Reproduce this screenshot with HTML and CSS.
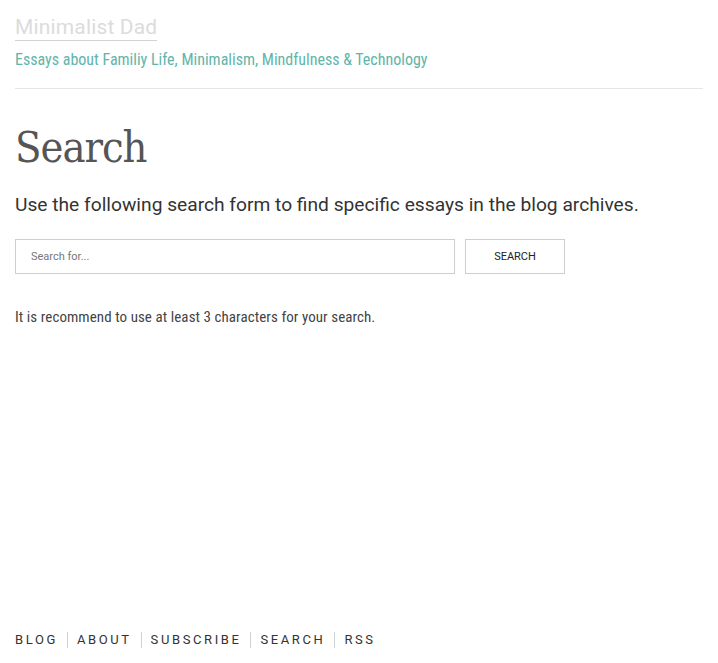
FILE: index.html
```html
<!DOCTYPE html>
<html lang="en">
<head>
<meta charset="utf-8">
<title>Search – Minimalist Dad</title>
<link rel="stylesheet" href="styles.css">
</head>
<body>
<div class="page">
  <header class="site-header">
    <a class="site-title" href="#">Minimalist Dad</a>
    <p class="tagline">Essays about Familiy Life, Minimalism, Mindfulness &amp; Technology</p>
  </header>
  <main class="content">
    <h1 class="page-title">Search</h1>
    <p class="lead">Use the following search form to find specific essays in the blog archives.</p>
    <form class="search-form">
      <input class="search-input" type="text" placeholder="Search for...">
      <button class="search-button" type="button">SEARCH</button>
    </form>
    <p class="note">It is recommend to use at least 3 characters for your search.</p>
  </main>
  <footer class="site-footer">
    <nav class="footer-nav">
      <a href="#">BLOG</a>
      <a href="#">ABOUT</a>
      <a href="#">SUBSCRIBE</a>
      <a href="#">SEARCH</a>
      <a href="#">RSS</a>
    </nav>
  </footer>
</div>
</body>
</html>
```
FILE: styles.css
```css
* { box-sizing: border-box; }
html, body { margin: 0; padding: 0; }
body {
  font-family: Roboto, "Liberation Sans", sans-serif;
  color: #333;
  background: #fff;
}
.page {
  min-height: 663px;
  padding: 0 15px;
  display: flex;
  flex-direction: column;
}
.site-header {
  padding-top: 15px;
  padding-bottom: 18px;
  border-bottom: 1px solid #e6e6e6;
}
.site-title {
  display: inline-block;
  font-size: 21px;
  line-height: 25px;
  color: #dcdcdc;
  text-decoration: none;
  border-bottom: 1px solid #d2d2d2;
  letter-spacing: 0.15px;
}
.tagline {
  margin: 9px 0 0;
  font-size: 16px;
  line-height: 20px;
  color: #5fb5aa;
  font-stretch: condensed;
}
.content { flex: 1; }
.page-title {
  margin: 33px 0 0;
  font-family: "DejaVu Serif", "Liberation Serif", serif;
  font-stretch: condensed;
  font-weight: normal;
  font-size: 43px;
  line-height: 50px;
  letter-spacing: -1px;
  color: #555;
}
.lead {
  margin: 20px 0 0;
  font-size: 19.2px;
  line-height: 26px;
  color: #333;
}
.search-form {
  display: flex;
  gap: 10px;
  margin-top: 21px;
}
.search-input {
  width: 440px;
  height: 35px;
  border: 1px solid #cfcfcf;
  padding: 0 15px;
  font-family: Roboto, sans-serif;
  font-size: 11px;
  color: #333;
  outline: none;
}
.search-input::placeholder { color: #777; }
.search-button {
  width: 100px;
  height: 35px;
  border: 1px solid #cfcfcf;
  background: #fff;
  font-family: Roboto, sans-serif;
  font-size: 11px;
  color: #222;
  padding: 0;
}
.note {
  margin: 33px 0 0;
  font-size: 15px;
  line-height: 20px;
  letter-spacing: 0.07px;
  color: #444;
  font-stretch: condensed;
}
.site-footer { padding-bottom: 15px; }
.footer-nav {
  display: flex;
  align-items: center;
}
.footer-nav a {
  font-size: 13px;
  line-height: 16px;
  letter-spacing: 2.6px;
  color: #333;
  text-decoration: none;
  padding: 0 9px 0 9px;
  border-left: 1px solid #d0d0d0;
}
.footer-nav a:first-child { padding-left: 0; border-left: none; }
```
